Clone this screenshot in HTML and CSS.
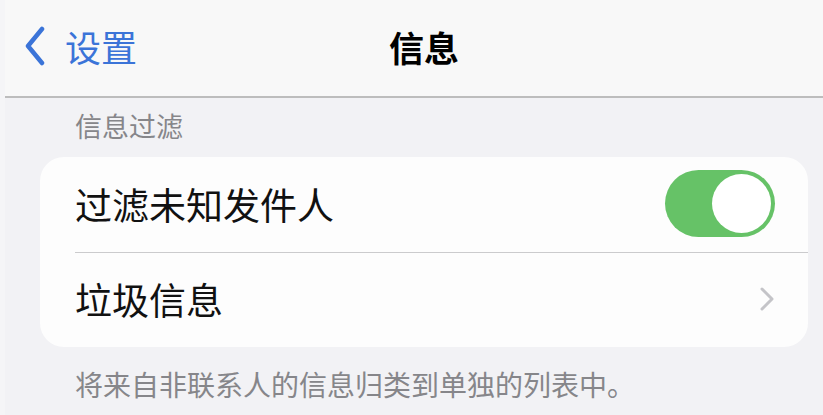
FILE: index.html
```html
<!DOCTYPE html>
<html lang="zh-CN">
<head>
<meta charset="utf-8">
<link rel="stylesheet" href="styles.css">
</head>
<body>
<div class="screen">
  <header class="nav">
    <div class="back">
      <svg class="back-icon" width="22" height="40" viewBox="0 0 22 40"><path d="M18 3 L4 20 L18 37" fill="none" stroke="#3b74d8" stroke-width="4.5" stroke-linecap="round" stroke-linejoin="round"/></svg>
      <span class="back-label">设置</span>
    </div>
    <h1 class="title">信息</h1>
  </header>
  <main class="content">
    <div class="section-header">信息过滤</div>
    <div class="card">
      <div class="row">
        <span class="row-label">过滤未知发件人</span>
        <div class="toggle"><div class="knob"></div></div>
      </div>
      <div class="row">
        <span class="row-label">垃圾信息</span>
        <svg class="chevron" width="16" height="26" viewBox="0 0 16 26"><path d="M3 3 L13 13 L3 23" fill="none" stroke="#c4c4c8" stroke-width="3" stroke-linecap="round" stroke-linejoin="round"/></svg>
      </div>
    </div>
    <div class="section-footer">将来自非联系人的信息归类到单独的列表中。</div>
  </main>
</div>
</body>
</html>
```

FILE: styles.css
```css
* { box-sizing: border-box; }
html, body { margin: 0; padding: 0; }
body {
  width: 823px;
  height: 415px;
  overflow: hidden;
  background: #f2f2f5;
  font-family: "Noto Sans CJK SC", "Noto Sans", sans-serif;
}
.screen {
  width: 823px;
  height: 415px;
  border-left: 5px solid #f5f5f7;
  display: flex;
  flex-direction: column;
}
.nav {
  height: 98px;
  flex: none;
  background: #f8f8f8;
  border-bottom: 2px solid #bdbdbd;
  display: flex;
  align-items: center;
  position: relative;
}
.back {
  display: flex;
  align-items: center;
  gap: 19px;
  padding-left: 19px;
  margin-top: -4px;
}
.back-label {
  color: #3b74d8;
  font-size: 36px;
  line-height: 40px;
}
.title {
  position: absolute;
  left: 0;
  right: 0;
  top: 25px;
  margin: 0;
  text-align: center;
  font-size: 35px;
  line-height: 44px;
  font-weight: 700;
  color: #000;
  padding-left: 20px;
}
.content {
  flex: 1;
  padding: 10px 15px 0 35px;
  display: flex;
  flex-direction: column;
}
.section-header {
  color: #86868a;
  font-size: 27px;
  line-height: 36px;
  padding-left: 35px;
  height: 49px;
}
.card {
  background: #fdfdfd;
  border-radius: 24px;
  padding-left: 35px;
  display: flex;
  flex-direction: column;
}
.row {
  height: 95px;
  display: flex;
  align-items: center;
  justify-content: space-between;
  padding-right: 33px;
  padding-bottom: 2px;
}
.row + .row {
  border-top: 1.5px solid #cbcbcd;
}
.row-label {
  font-size: 37px;
  line-height: 44px;
  color: #111;
}
.toggle {
  width: 110px;
  height: 67px;
  border-radius: 34px;
  background: #66c267;
  padding: 4px;
  display: flex;
  justify-content: flex-end;
}
.knob {
  width: 59px;
  height: 59px;
  border-radius: 50%;
  background: #fff;
}
.section-footer {
  color: #86868a;
  font-size: 28px;
  line-height: 36px;
  padding-left: 35px;
  padding-top: 19px;
}
```
